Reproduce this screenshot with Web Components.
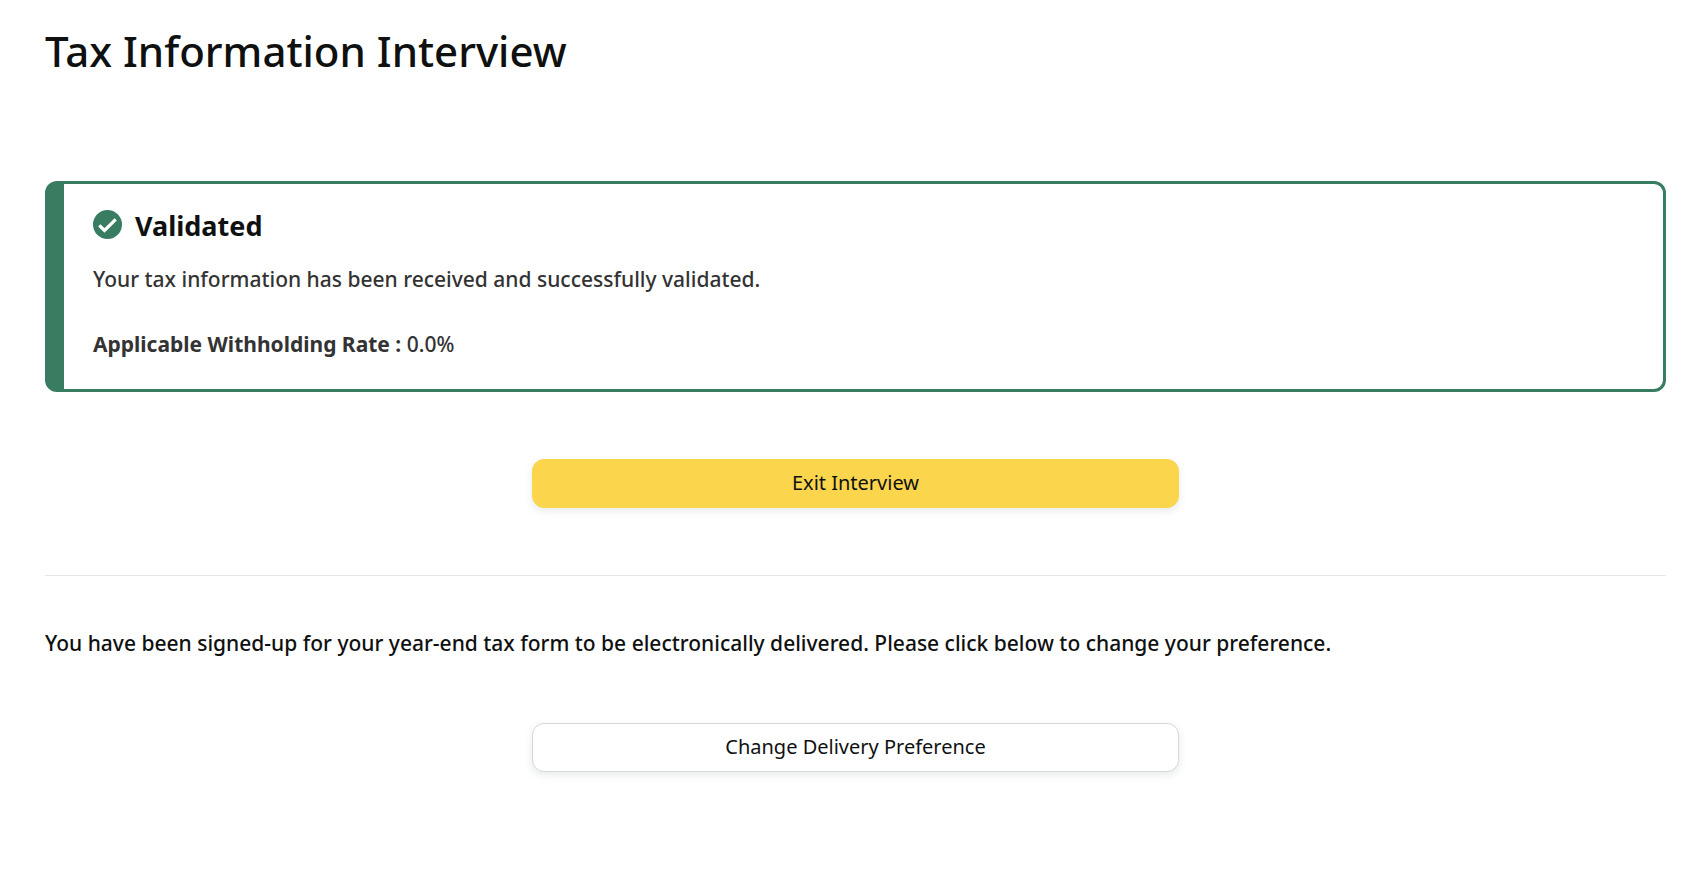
<!DOCTYPE html>
<html lang="en">
<head>
<meta charset="utf-8">
<meta name="viewport" content="width=device-width, initial-scale=1">
<title>Tax Information Interview</title>
<style>
    body {
        margin: 0;
        background: #fff;
        color: #0f1111;
        font-family: "Noto Sans", "Open Sans", sans-serif;
        font-size: 21px;
        font-weight: 500;
        line-height: 32px;
    }
</style>
</head>
<body>
<tax-interview-page>
    <span slot="title">Tax Information Interview</span>
    <status-alert heading="Validated">
        <p>Your tax information has been received and successfully validated.</p>
        <p><strong>Applicable Withholding Rate :</strong> 0.0%</p>
    </status-alert>
    <action-button variant="primary">Exit Interview</action-button>
    <section-divider></section-divider>
    <p>You have been signed-up for your year-end tax form to be electronically delivered. Please click below to change your preference.</p>
    <action-button>Change Delivery Preference</action-button>
</tax-interview-page>

<script>
class TaxInterviewPage extends HTMLElement {
    constructor() {
        super()
        this.attachShadow({ mode: "open" })
        this.shadowRoot.innerHTML = `
            <style>
                :host { display: block; padding: 23px 22px 64px 45px; }
                h1 { margin: 0 0 102px; font-size: 42px; font-weight: 500; line-height: 56px; }
                ::slotted(p) { margin: 51px 0 64px; }
                ::slotted(action-button) { margin: 0 auto; }
                ::slotted(action-button[variant="primary"]) { margin: 67px auto; }
            </style>
            <main>
                <h1><slot name="title"></slot></h1>
                <slot></slot>
            </main>
        `
    }
}

class StatusAlert extends HTMLElement {
    connectedCallback() {
        if (this.shadowRoot) return
        this.attachShadow({ mode: "open" })
        this.render()
    }

    render() {
        this.shadowRoot.innerHTML = `
            <style>
                :host {
                    display: block;
                    padding: 22px 29px 29px;
                    border: 3px solid #387c62;
                    border-left-width: 19px;
                    border-radius: 12px;
                    color: #333;
                }
                header { display: flex; gap: 13px; margin-bottom: 17px; }
                svg { width: 29px; height: 29px; margin-top: 4px; }
                h2 { margin: 0; color: #0f1111; font-size: 27px; font-weight: 700; line-height: 40px; }
                .body { display: grid; gap: 33px; }
                ::slotted(p) { margin: 0; }
            </style>
            <header>
                <svg viewBox="0 0 29 29" aria-hidden="true">
                    <circle cx="14.5" cy="14.5" r="14.5" fill="#387c62"/>
                    <path d="M6.3 15.4 11.5 20.5 22.7 9.4" fill="none" stroke="#fff" stroke-width="3.2"/>
                </svg>
                <h2>${this.getAttribute("heading") ?? ""}</h2>
            </header>
            <div class="body"><slot></slot></div>
        `
    }
}

class ActionButton extends HTMLElement {
    constructor() {
        super()
        this.attachShadow({ mode: "open" })
        this.shadowRoot.innerHTML = `
            <style>
                :host { display: block; box-sizing: border-box; width: 40%; padding: 0 1px; }
                button {
                    display: block;
                    width: 100%;
                    box-sizing: border-box;
                    padding: 7px 16px 8px;
                    border: 1px solid #d5d9d9;
                    border-radius: 12px;
                    background: #fff;
                    box-shadow: 0 3px 8px rgba(15, 50, 50, 0.1);
                    color: #0f1111;
                    font: inherit;
                    font-size: 20px;
                    font-weight: 400;
                    cursor: pointer;
                }
                :host([variant="primary"]) button { border-color: #fbd54b; background: #fbd64d; }
            </style>
            <button type="button"><slot></slot></button>
        `
    }
}

class SectionDivider extends HTMLElement {
    constructor() {
        super()
        this.attachShadow({ mode: "open" })
        this.shadowRoot.innerHTML = `
            <style>
                :host { display: block; }
                hr { margin: 0; border: 0; border-top: 1px solid #e7e7e7; }
            </style>
            <hr>
        `
    }
}

customElements.define("tax-interview-page", TaxInterviewPage)
customElements.define("status-alert", StatusAlert)
customElements.define("action-button", ActionButton)
customElements.define("section-divider", SectionDivider)
</script>
</body>
</html>
